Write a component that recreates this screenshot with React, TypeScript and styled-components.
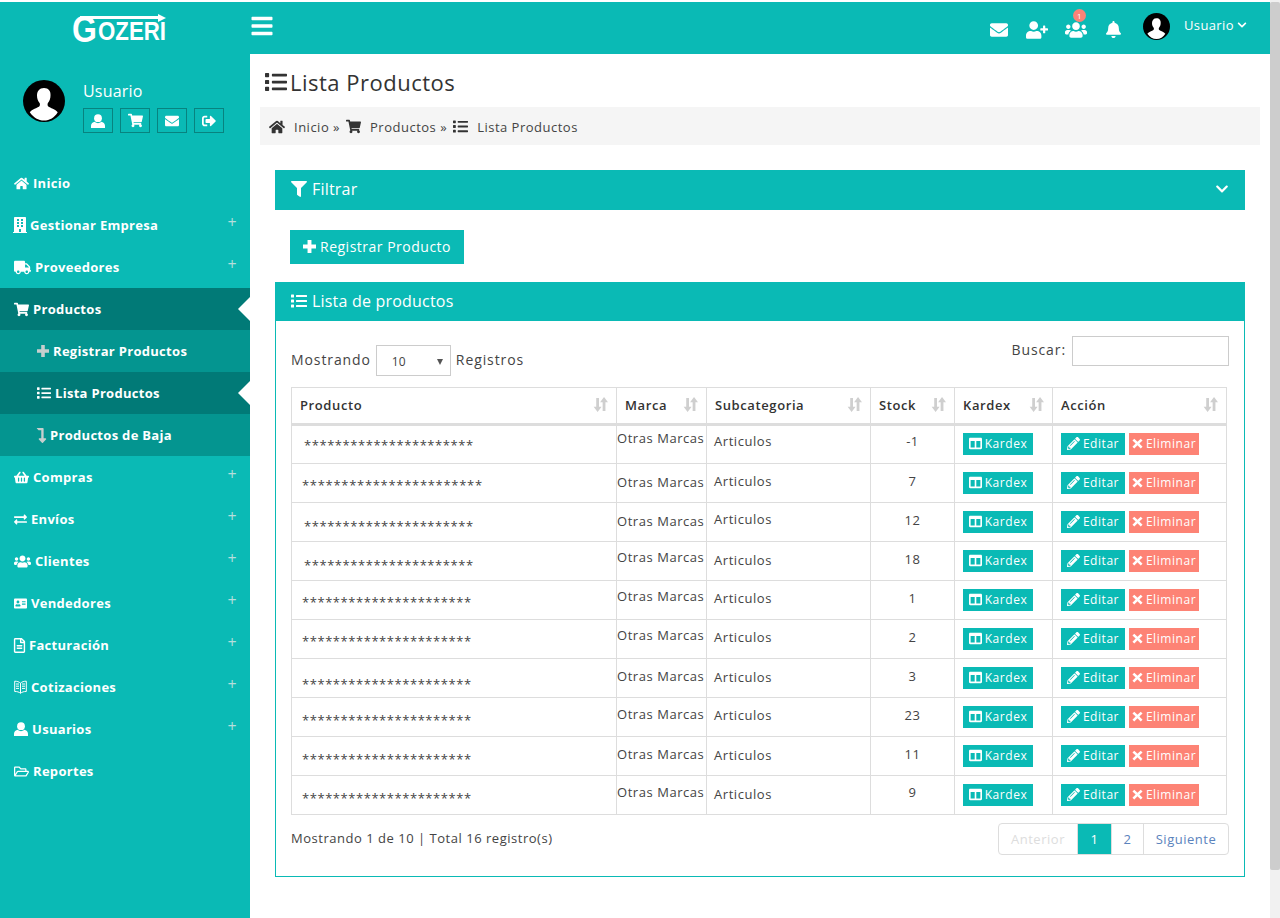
import React from 'react'
import styled, { createGlobalStyle } from 'styled-components'
import {
  FaAddressCard, FaBars, FaBell, FaBuilding, FaChevronDown, FaColumns, FaEnvelope, FaExchangeAlt, FaFilter,
  FaHome, FaList, FaLevelDownAlt, FaPencilAlt, FaRegFileAlt, FaRegFolderOpen, FaShoppingBasket,
  FaShoppingCart, FaTruck, FaUserPlus, FaUsers, FaSignOutAlt,
} from 'react-icons/fa'

const TEAL = '#0abab5'

const GlobalStyle = createGlobalStyle`
  html, body { margin: 0; padding: 0; background: #fff; overflow: hidden; }
  body { font-family: "Open Sans", "Liberation Sans", sans-serif; color: #333; }
  * { box-sizing: border-box; }
`

const Page = styled.div`
  display: flex;
  width: 1280px;
  height: 918px;
  overflow: hidden;
`

const Layout = styled.div`
  display: flex;
  width: 1270px;
  padding-top: 2px;
`

const ScrollTrack = styled.div`
  width: 10px;
  background: #f1f1f1;
  padding-top: 2px;
`

const ScrollThumb = styled.div`
  height: 868px;
  background: #cdcdcd;
  border-radius: 2px;
`

const Sidebar = styled.aside`
  width: 250px;
  flex: none;
  background: ${TEAL};
  color: #fff;
`

const Brand = styled.div`
  height: 52px;
  padding: 12px 0 0 72px;
`

const Logo = styled.div`
  position: relative;
  width: 94px;
  height: 30px;
  font-family: "Liberation Sans", sans-serif;
  font-weight: 700;
  line-height: 1;
  display: flex;
  align-items: flex-end;
  svg { position: absolute; left: 8px; top: 0; }
`

const LogoG = styled.span`
  width: 26px;
  font-size: 36px;
  line-height: 28px;
  transform: scaleX(0.89);
  transform-origin: left bottom;
`

const LogoRest = styled.span`
  font-size: 25px;
  line-height: 21px;
  margin-bottom: 2px;
  transform: scaleX(0.89);
  transform-origin: left bottom;
`

const UserBox = styled.div`
  display: flex;
  padding: 26px 0 0 23px;
  height: 108px;
`

const Avatar = styled.svg<{ $size: number }>`
  width: ${p => p.$size}px;
  height: ${p => p.$size}px;
  flex: none;
`

const UserInfo = styled.div`
  margin: 0 0 0 18px;
`

const UserName = styled.div`
  font-size: 16px;
  line-height: 22px;
  letter-spacing: 0.2px;
  margin-bottom: 6px;
`

const UserActions = styled.div`
  display: flex;
  gap: 7px;
`

const UserAction = styled.div`
  width: 30px;
  height: 25px;
  border: 1px solid #08837f;
  display: flex;
  align-items: center;
  justify-content: center;
`

const MenuItem = styled.div<{ $active?: boolean; $sub?: boolean }>`
  position: relative;
  height: 42px;
  display: flex;
  align-items: center;
  gap: 4px;
  padding-left: ${p => (p.$sub ? 37 : 14)}px;
  background: ${p => (p.$active ? '#017a77' : p.$sub ? '#049590' : 'transparent')};
  font-size: 13px;
  font-weight: 700;
  letter-spacing: 0.3px;
  white-space: nowrap;
`

// react-icons gives every icon a square box, the narrow ones need their real width
const MenuIcon = styled.span<{ $width: number }>`
  width: ${p => p.$width}px;
  flex: none;
  display: flex;
  justify-content: center;
  svg { flex: none; }
`

const MenuPlus = styled.span`
  position: absolute;
  right: 13px;
  top: 9px;
  font-size: 16px;
  line-height: 18px;
  font-weight: 400;
  color: #b5dedc;
`

const MenuArrow = styled.span`
  position: absolute;
  right: 0;
  top: 9px;
  width: 0;
  height: 0;
  border-top: 12px solid transparent;
  border-bottom: 12px solid transparent;
  border-right: 12px solid #fff;
`

const Main = styled.main`
  width: 1020px;
  flex: none;
`

const TopBar = styled.header`
  height: 52px;
  background: ${TEAL};
  color: #fff;
  display: flex;
  align-items: center;
  padding: 0 23px 0 0;
`

const Burger = styled.div`
  font-size: 24px;
  display: flex;
  margin: 0 auto 4px 0;
`

const TopIcon = styled.div<{ $gap: number }>`
  position: relative;
  display: flex;
  font-size: 18px;
  margin-left: ${p => p.$gap}px;
  margin-top: 3px;
`

const Badge = styled.span`
  position: absolute;
  top: -10px;
  left: 8px;
  width: 13px;
  height: 13px;
  border-radius: 50%;
  background: #fb8377;
  font-size: 8px;
  line-height: 13px;
  text-align: center;
  color: #fff;
`

const TopUser = styled.div`
  display: flex;
  align-items: flex-start;
  height: 27px;
  margin: 0 0 3px 21px;
  font-size: 13px;
  letter-spacing: 0.4px;
`

const TopUserName = styled.span`
  margin: 3px 0 0 14px;
  line-height: 18px;
  display: flex;
  align-items: center;
  gap: 3px;
`

const Content = styled.div`
  padding: 0 10px;
`

const Title = styled.h1`
  margin: 0;
  height: 53px;
  padding: 3px 0 0 5px;
  display: flex;
  align-items: center;
  gap: 3px;
  font-size: 22px;
  font-weight: 400;
  letter-spacing: 0.5px;
  color: #333;
`

const Breadcrumb = styled.nav`
  height: 38px;
  background: #f5f5f5;
  display: flex;
  align-items: center;
  padding: 1px 0 0 9px;
  font-size: 13px;
  letter-spacing: 0.5px;
  color: #444;
  svg { color: #333; }
`

const CrumbLabel = styled.span`
  margin: 0 6px 0 9px;
`

const Section = styled.section`
  margin: 25px 25px 0;
`

const BarHeader = styled.div<{ $height: number }>`
  height: ${p => p.$height}px;
  background: ${TEAL};
  color: #fff;
  display: flex;
  align-items: center;
  gap: 5px;
  padding: 0 16px 2px;
  font-size: 16px;
  letter-spacing: 0.2px;
`

const FilterChevron = styled.span`
  margin-left: auto;
  display: flex;
  font-size: 14px;
`

const RegisterButton = styled.button`
  display: flex;
  align-items: center;
  gap: 4px;
  width: 174px;
  height: 34px;
  margin: 20px 0 18px 15px;
  padding: 0 0 2px 13px;
  border: none;
  background: ${TEAL};
  color: #fff;
  font-family: inherit;
  font-size: 14px;
  letter-spacing: 0.5px;
`

const PanelBody = styled.div`
  height: 556px;
  border: 1px solid ${TEAL};
  border-top: none;
  padding: 15px 15px 0;
`

const Controls = styled.div`
  height: 51px;
  display: flex;
  justify-content: space-between;
  align-items: flex-start;
  font-size: 14px;
  letter-spacing: 0.9px;
  color: #444;
`

const LengthControl = styled.div`
  display: flex;
  align-items: center;
  gap: 5px;
  margin-top: 7px;
`

const LengthSelect = styled.div`
  width: 75px;
  height: 31px;
  margin-top: 2px;
  border: 1px solid #ccc;
  display: flex;
  align-items: center;
  justify-content: space-between;
  padding: 2px 7px 0 15px;
  font-size: 12px;
  letter-spacing: 0;
`

const SelectCaret = styled.span`
  width: 0;
  height: 0;
  border-left: 3px solid transparent;
  border-right: 3px solid transparent;
  border-top: 6px solid #555;
`

const SearchControl = styled.label`
  display: flex;
  align-items: flex-start;
  gap: 6px;
  line-height: 28px;
`

const SearchInput = styled.input`
  width: 157px;
  height: 30px;
  border: 1px solid #ccc;
  background: #fff;
`

const Table = styled.table`
  width: 935px;
  border-collapse: collapse;
  table-layout: fixed;
`

const HeadCell = styled.th`
  position: relative;
  height: 37px;
  padding: 0 8px 2px;
  border: 1px solid #ddd;
  border-bottom: 3px solid #ddd;
  text-align: left;
  font-size: 13px;
  font-weight: 600;
  letter-spacing: 0.6px;
  color: #333;
`

const SortIcon = styled.svg`
  position: absolute;
  right: 8px;
  top: 9px;
  width: 15px;
  height: 15px;
  fill: #cfcfcf;
`

const Row = styled.tr`
  height: 39px;
  &:first-child > td > div:last-child { margin-top: -1px; }
`

const Cell = styled.td`
  padding: 0;
  border: 1px solid #ddd;
  font-size: 13px;
  letter-spacing: 0.55px;
  color: #444;
  vertical-align: top;
  overflow: hidden;
`

const CellText = styled.div<{ $left: number; $top: number; $center?: boolean; $wide?: boolean }>`
  padding: ${p => p.$top}px 0 0 ${p => p.$left}px;
  line-height: 18px;
  white-space: nowrap;
  ${p => p.$center && 'text-align: center;'}
  ${p => p.$wide && 'letter-spacing: 0.7px;'}
`

const CellActions = styled.div`
  display: flex;
  gap: 4px;
  padding: 8px 0 0 8px;
`

const SmallButton = styled.span<{ $danger?: boolean; $width: number }>`
  width: ${p => p.$width}px;
  height: 22px;
  padding-bottom: 1px;
  display: inline-flex;
  align-items: center;
  justify-content: center;
  gap: 3px;
  background: ${p => (p.$danger ? '#fd8375' : TEAL)};
  color: #fff;
  font-size: 12px;
  letter-spacing: 0.55px;
`

const TableFooter = styled.div`
  display: flex;
  justify-content: space-between;
  align-items: flex-start;
  margin-top: 8px;
  font-size: 13px;
  letter-spacing: 0.52px;
  color: #444;
`

const FooterInfo = styled.span`
  margin-top: 6px;
`

const Pagination = styled.div`
  display: flex;
  height: 32px;
  border: 1px solid #ddd;
  border-radius: 4px;
`

const PageLink = styled.span<{ $width: number; $active?: boolean; $disabled?: boolean }>`
  width: ${p => p.$width}px;
  display: flex;
  align-items: center;
  justify-content: center;
  background: ${p => (p.$active ? TEAL : 'transparent')};
  color: ${p => (p.$active ? '#fff' : p.$disabled ? '#ddd' : '#5b83bd')};
  & + & { border-left: 1px solid #ddd; }
`

const AvatarArt = ({ size }: { size: number }) => (
  <Avatar $size={size} viewBox="0 0 42 42">
    <circle cx="21" cy="21" r="21" fill="#000" />
    <path
      fill="#fff"
      d="M21 8c-4.6 0-7 3.3-7 7.600 0 3 1 5.600 2.600 7.400.5.6.5 2.900-.4 3.600-1.800 1.300-7.300 2.900-9.400 5.600C10.500 37.700 15.400 40.500 21 40.500s10.500-2.800 13.700-8.300c-2.100-2.700-7.600-4.300-9.400-5.600-.9-.7-.9-3-.4-3.600 1.600-1.800 2.600-4.400 2.600-7.400C28 11.300 25.600 8 21 8z"
    />
  </Avatar>
)

const UserGlyph = ({ size }: { size: number }) => (
  <svg width={size} height={size} viewBox="0 0 14 14" fill="currentColor">
    <circle cx="7" cy="4.200" r="3.900" />
    <path d="M0 14v-2.200C0 9.500 1.800 8.200 3.800 7.800 5 8.800 5.900 9.200 7 9.200s2-.4 3.200-1.400c2 .4 3.800 1.700 3.800 4V14z" />
  </svg>
)

const PlusGlyph = ({ size, color }: { size: number; color?: string }) => (
  <svg width={size} height={size} viewBox="0 0 12 12" fill={color ?? 'currentColor'}>
    <path d="M4.200 0h3.600v4.200H12v3.600H7.800V12H4.200V7.800H0V4.200h4.200z" />
  </svg>
)

const CrossGlyph = ({ size }: { size: number }) => (
  <svg width={size} height={size} viewBox="0 0 12 12" fill="currentColor">
    <path d="M2.500.8 6 4.200 9.500.8 11.500 2.700 8 6.100l3.500 3.400-2 2L6 8 2.500 11.500l-2-2L4 6.100.5 2.700z" />
  </svg>
)

const BookGlyph = () => (
  <svg width={13} height={14} viewBox="0 0 13 14" fill="none" stroke="currentColor" strokeWidth="1">
    <path d="M6.500 3.200C5 1.700 3 1.200.7 1.200v10.300c2.300 0 4.300.4 5.800 1.800 1.500-1.400 3.500-1.800 5.800-1.800V1.200C10 1.200 8 1.700 6.500 3.200zm0 0v10M2 4h3M2 6.200h3M2 8.400h3M8 4h3M8 6.200h3M8 8.400h3" />
  </svg>
)

const menu = [
  { label: 'Inicio', width: 15, icon: <FaHome size={15} /> },
  { label: 'Gestionar Empresa', width: 12, icon: <FaBuilding size={16} />, plus: true },
  { label: 'Proveedores', width: 17, icon: <FaTruck size={17} />, plus: true },
  { label: 'Productos', width: 15, icon: <FaShoppingCart size={15} />, active: true },
  { label: 'Registrar Productos', width: 12, icon: <PlusGlyph size={12} color="#c6cfce" />, sub: true },
  { label: 'Lista Productos', width: 14, icon: <FaList size={14} />, sub: true, active: true },
  { label: 'Productos de Baja', width: 9, icon: <FaLevelDownAlt size={15} color="#c6cfce" />, sub: true },
  { label: 'Compras', width: 15, icon: <FaShoppingBasket size={15} />, plus: true },
  { label: 'Envíos', width: 13, icon: <FaExchangeAlt size={13} />, plus: true },
  { label: 'Clientes', width: 17, icon: <FaUsers size={17} />, plus: true },
  { label: 'Vendedores', width: 13, icon: <FaAddressCard size={13} />, plus: true },
  { label: 'Facturación', width: 11, icon: <FaRegFileAlt size={15} />, plus: true },
  { label: 'Cotizaciones', width: 13, icon: <BookGlyph />, plus: true },
  { label: 'Usuarios', width: 14, icon: <UserGlyph size={14} />, plus: true },
  { label: 'Reportes', width: 15, icon: <FaRegFolderOpen size={15} /> },
]

const columns = [
  { label: 'Producto', width: 325 },
  { label: 'Marca', width: 90 },
  { label: 'Subcategoria', width: 164 },
  { label: 'Stock', width: 84 },
  { label: 'Kardex', width: 98 },
  { label: 'Acción', width: 174 },
]

// cell offsets follow the reference, its rows are not quite aligned
const rows = [
  { stars: 22, starX: 12, starY: 11, brandY: 4, subY: 7, stock: '-1', stockY: 7 },
  { stars: 23, starX: 10, starY: 12, brandY: 9, subY: 8, stock: '7', stockY: 8 },
  { stars: 22, starX: 12, starY: 14, brandY: 9, subY: 7, stock: '12', stockY: 8 },
  { stars: 22, starX: 12, starY: 14, brandY: 6, subY: 9, stock: '18', stockY: 8 },
  { stars: 22, starX: 10, starY: 12, brandY: 6, subY: 8, stock: '1', stockY: 8 },
  { stars: 22, starX: 10, starY: 12, brandY: 6, subY: 8, stock: '2', stockY: 8 },
  { stars: 22, starX: 10, starY: 16, brandY: 8, subY: 9, stock: '3', stockY: 8 },
  { stars: 22, starX: 10, starY: 13, brandY: 7, subY: 8, stock: '23', stockY: 8 },
  { stars: 22, starX: 10, starY: 13, brandY: 8, subY: 9, stock: '11', stockY: 8 },
  { stars: 22, starX: 10, starY: 13, brandY: 7, subY: 9, stock: '9', stockY: 7 },
]

const Sort = () => (
  <SortIcon viewBox="0 0 14 14">
    <path d="M3 1h2.600v8H8L4.300 14 .6 9H3zM9 13V5H6.600L10.300 0 14 5h-2.400v8z" />
  </SortIcon>
)

export default function App() {
  return (
    <Page>
      <GlobalStyle />
      <Layout>
        <Sidebar>
          <Brand>
            <Logo>
              <svg width="86" height="10" viewBox="0 0 86 10">
                <path fill="#fff" d="M0 2h78V0l8 4-8 4V5H0z" />
              </svg>
              <LogoG>G</LogoG>
              <LogoRest>OZERI</LogoRest>
            </Logo>
          </Brand>
          <UserBox>
            <AvatarArt size={42} />
            <UserInfo>
              <UserName>Usuario</UserName>
              <UserActions>
                <UserAction><UserGlyph size={14} /></UserAction>
                <UserAction><FaShoppingCart size={15} /></UserAction>
                <UserAction><FaEnvelope size={14} /></UserAction>
                <UserAction><FaSignOutAlt size={14} /></UserAction>
              </UserActions>
            </UserInfo>
          </UserBox>
          {menu.map(item => (
            <MenuItem key={item.label} $active={item.active} $sub={item.sub}>
              <MenuIcon $width={item.width}>{item.icon}</MenuIcon>
              {item.label}
              {item.plus && <MenuPlus>+</MenuPlus>}
              {item.active && <MenuArrow />}
            </MenuItem>
          ))}
        </Sidebar>
        <Main>
          <TopBar>
            <Burger><FaBars /></Burger>
            <TopIcon $gap={0}><FaEnvelope /></TopIcon>
            <TopIcon $gap={18}><FaUserPlus size={22} /></TopIcon>
            <TopIcon $gap={17}><FaUsers size={22} /><Badge>1</Badge></TopIcon>
            <TopIcon $gap={18}><FaBell size={17} /></TopIcon>
            <TopUser>
              <AvatarArt size={27} />
              <TopUserName>Usuario <FaChevronDown size={10} /></TopUserName>
            </TopUser>
          </TopBar>
          <Content>
            <Title><FaList size={22} />Lista Productos</Title>
            <Breadcrumb>
              <FaHome size={16} />
              <CrumbLabel>Inicio »</CrumbLabel>
              <FaShoppingCart size={15} />
              <CrumbLabel>Productos »</CrumbLabel>
              <FaList size={15} />
              <CrumbLabel>Lista Productos</CrumbLabel>
            </Breadcrumb>
          </Content>
          <Section>
            <BarHeader $height={40}>
              <FaFilter size={16} />
              Filtrar
              <FilterChevron><FaChevronDown /></FilterChevron>
            </BarHeader>
            <RegisterButton><PlusGlyph size={13} />Registrar Producto</RegisterButton>
            <BarHeader $height={39}>
              <FaList size={16} />
              Lista de productos
            </BarHeader>
            <PanelBody>
              <Controls>
                <LengthControl>
                  Mostrando
                  <LengthSelect>10<SelectCaret /></LengthSelect>
                  Registros
                </LengthControl>
                <SearchControl>Buscar: <SearchInput /></SearchControl>
              </Controls>
              <Table>
                <colgroup>
                  {columns.map(col => <col key={col.label} width={col.width} />)}
                </colgroup>
                <thead>
                  <tr>
                    {columns.map(col => <HeadCell key={col.label}>{col.label}<Sort /></HeadCell>)}
                  </tr>
                </thead>
                <tbody>
                  {rows.map((row, i) => (
                    <Row key={i}>
                      <Cell><CellText $left={row.starX} $top={row.starY} $wide={row.stars > 22}>{'*'.repeat(row.stars)}</CellText></Cell>
                      <Cell><CellText $left={0} $top={row.brandY}>Otras Marcas</CellText></Cell>
                      <Cell><CellText $left={7} $top={row.subY}>Articulos</CellText></Cell>
                      <Cell><CellText $left={0} $top={row.stockY} $center>{row.stock}</CellText></Cell>
                      <Cell>
                        <CellActions>
                          <SmallButton $width={70}><FaColumns size={13} />Kardex</SmallButton>
                        </CellActions>
                      </Cell>
                      <Cell>
                        <CellActions>
                          <SmallButton $width={64}><FaPencilAlt size={13} />Editar</SmallButton>
                          <SmallButton $width={70} $danger><CrossGlyph size={11} />Eliminar</SmallButton>
                        </CellActions>
                      </Cell>
                    </Row>
                  ))}
                </tbody>
              </Table>
              <TableFooter>
                <FooterInfo>Mostrando 1 de 10 | Total 16 registro(s)</FooterInfo>
                <Pagination>
                  <PageLink $width={78} $disabled>Anterior</PageLink>
                  <PageLink $width={34} $active>1</PageLink>
                  <PageLink $width={32}>2</PageLink>
                  <PageLink $width={85}>Siguiente</PageLink>
                </Pagination>
              </TableFooter>
            </PanelBody>
          </Section>
        </Main>
      </Layout>
      <ScrollTrack><ScrollThumb /></ScrollTrack>
    </Page>
  )
}
